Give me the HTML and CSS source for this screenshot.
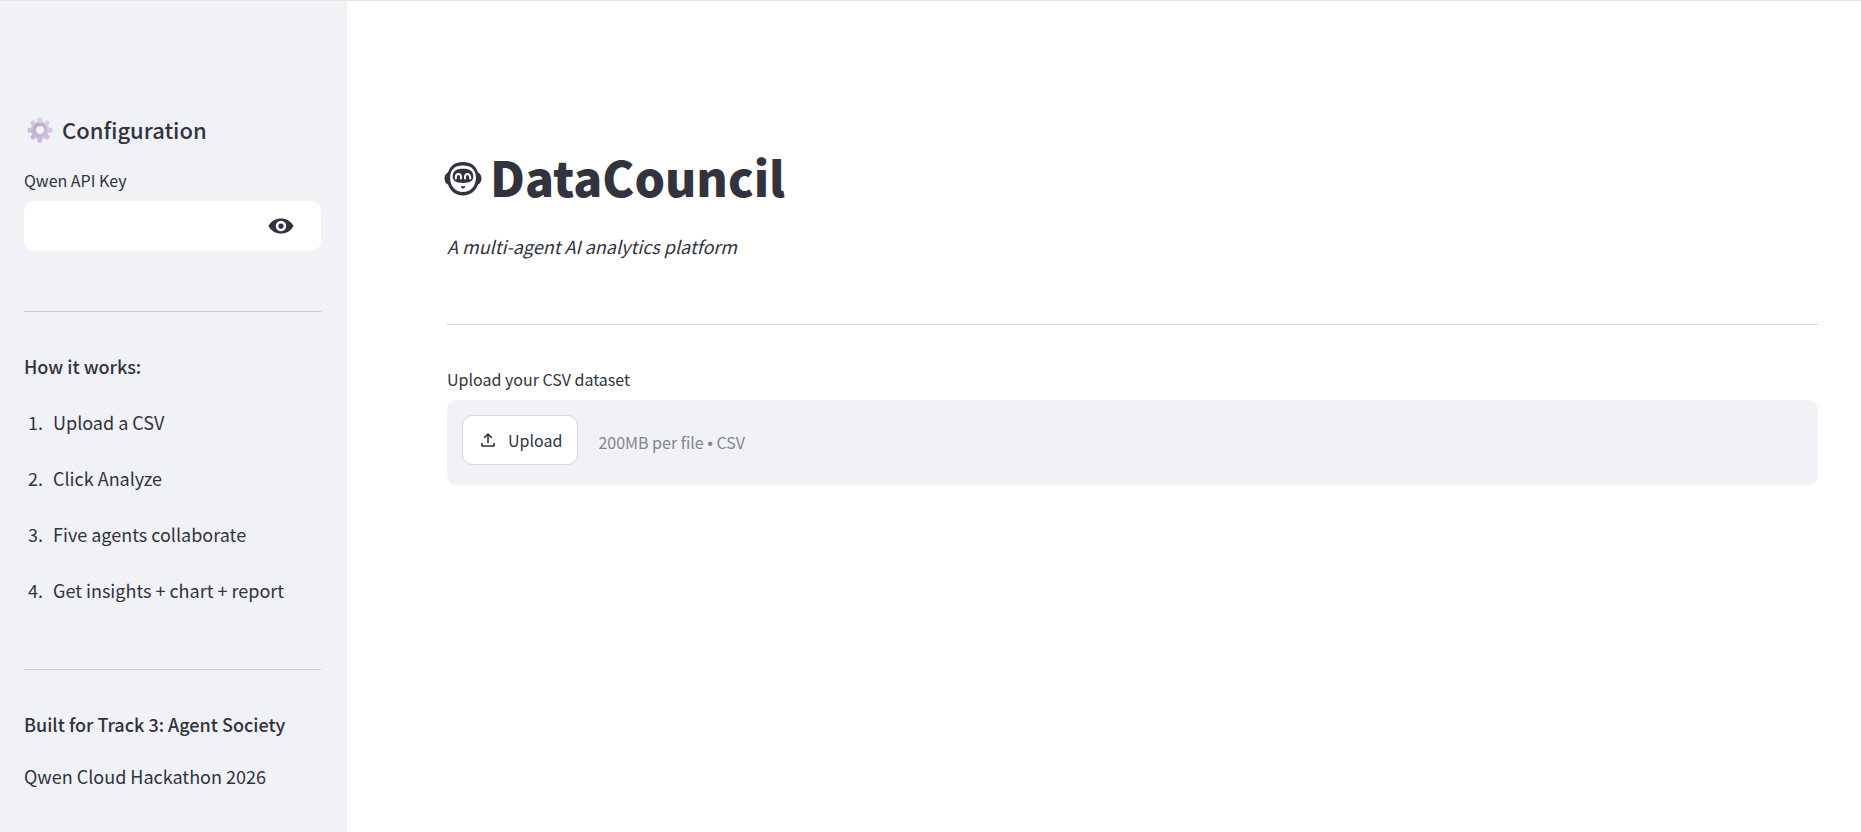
FILE: index.html
```html
<!DOCTYPE html>
<html lang="en">
<head>
<meta charset="utf-8">
<meta name="viewport" content="width=device-width, initial-scale=1">
<title>DataCouncil</title>
<link rel="stylesheet" href="styles.css">
</head>
<body>
<div class="decoration"></div>
<div class="app">
  <aside class="sidebar">
    <h2 class="sidebar-title">
      <svg class="gear" viewBox="0 0 26 26" aria-hidden="true">
        <defs>
          <linearGradient id="teeth" gradientUnits="userSpaceOnUse" x1="18" y1="2" x2="8" y2="25">
            <stop offset="0" stop-color="#dcd4e8"/>
            <stop offset="1" stop-color="#c3b4d8"/>
          </linearGradient>
          <linearGradient id="hub" gradientUnits="userSpaceOnUse" x1="8" y1="6" x2="18" y2="20">
            <stop offset="0" stop-color="#b8acc2"/>
            <stop offset="1" stop-color="#cbbcdb"/>
          </linearGradient>
        </defs>
        <g stroke="url(#teeth)" stroke-width="5" stroke-linecap="round">
          <path d="M13 3l.1 3M13 23l.1-3M3 13l3 .1M23 13l-3 .1M5.900 5.900l2 2M20.100 5.900l-2 2M5.900 20.100l2-2M20.100 20.100l-2-2"/>
        </g>
        <circle cx="13" cy="13" r="7.500" fill="none" stroke="url(#teeth)" stroke-width="3"/>
        <circle cx="13" cy="13" r="5.700" fill="none" stroke="url(#hub)" stroke-width="3.400"/>
      </svg>
      <span>Configuration</span>
    </h2>
    <label class="field-label" for="api-key">Qwen API Key</label>
    <div class="password">
      <input class="password-input" id="api-key" type="password">
      <button class="reveal" type="button" aria-label="Show password text">
        <svg class="eye" viewBox="0 0 24 24" aria-hidden="true">
          <path fill="#31333f" fill-rule="evenodd" d="M2 12C4 8 7.800 6 12 6s8 2 10 6c-2 4-5.800 6-10 6s-8-2-10-6zM12 7.800a4.200 4.200 0 1 0 0 8.400 4.200 4.200 0 0 0 0-8.400z"/>
          <circle cx="12" cy="12" r="2.100" fill="#31333f"/>
        </svg>
      </button>
    </div>
    <hr class="rule">
    <p class="strong">How it works:</p>
    <ol class="steps">
      <li>Upload a CSV</li>
      <li>Click Analyze</li>
      <li>Five agents collaborate</li>
      <li>Get insights + chart + report</li>
    </ol>
    <hr class="rule">
    <p class="strong">Built for Track 3: Agent Society</p>
    <p class="credit">Qwen Cloud Hackathon 2026</p>
  </aside>
  <main class="main">
    <h1 class="title">
      <svg class="robot" viewBox="0 0 38 34" aria-hidden="true">
        <path fill="#31333f" d="M19 0C27 0 32 4 34 10.500c2.500 1 3.500 3.500 3.500 6s-1 5-3.500 6C31.500 29.500 26 33.500 19 33.500S6.500 29.500 4 22.500c-2.500-1-3.500-3.500-3.500-6s1-5 3.500-6C6 4 11 0 19 0z"/>
        <path fill="#fff" d="M19 3.600c8.500 0 12.900 4.400 12.900 12.200 0 8.600-5.200 14.200-12.900 14.200S6.100 24.400 6.100 15.800C6.100 8 10.500 3.600 19 3.600z"/>
        <path fill="#31333f" d="M19 6.800c7.200 0 10.300 2.500 10.300 8 0 4.500-4 6.200-10.300 6.200S8.700 19.300 8.700 14.800c0-5.500 3.100-8 10.300-8z"/>
        <path fill="none" stroke="#fff" stroke-width="2" stroke-linecap="round" d="M11.800 16.500v-1.200a2.600 3.200 0 0 1 5.200 0v1.200M21 16.500v-1.200a2.600 3.200 0 0 1 5.200 0v1.200"/>
        <path fill="#31333f" d="M17 24.200h4c.5 1.300-.8 2.300-2 2.300s-2.500-1-2-2.300z"/>
      </svg>
      <span>DataCouncil</span>
    </h1>
    <p class="subtitle">A multi-agent AI analytics platform</p>
    <hr class="rule rule-main">
    <section class="uploader" aria-labelledby="upload-label">
      <p class="field-label" id="upload-label">Upload your CSV dataset</p>
      <div class="dropzone">
        <button class="upload" type="button">
          <svg class="upload-icon" viewBox="0 0 20 20" fill="none" stroke="#31333f" stroke-width="1.600" stroke-linecap="round" stroke-linejoin="round" aria-hidden="true">
            <path d="M10 12.500V4.500M6.500 7.500L10 4l3.500 3.500M4 13.500v2.500h12v-2.500"/>
          </svg>
          <span>Upload</span>
        </button>
        <span class="limit">200MB per file <span class="bullet">•</span> CSV</span>
      </div>
    </section>
  </main>
</div>
</body>
</html>
```

FILE: styles.css
```css
* {
  box-sizing: border-box;
  margin: 0;
  padding: 0;
}

body {
  background: #fff;
  color: #31333f;
  font: 400 18px/32px "Noto Sans CJK SC", "Noto Sans", sans-serif;
}

button,
input {
  font: inherit;
  color: inherit;
}

.decoration {
  position: absolute;
  top: 0;
  left: 0;
  right: 0;
  height: 1px;
  background: #f9ddd9;
}

.app {
  display: flex;
  min-height: 100vh;
}

.sidebar {
  flex: 0 0 347px;
  padding: 113px 26px 20px 24px;
  background: #f0f2f6;
}

.sidebar-title {
  display: flex;
  align-items: center;
  gap: 9px;
  padding-left: 3px;
  margin-bottom: 23px;
  font-size: 22px;
  font-weight: 500;
}

.gear {
  width: 26px;
  height: 26px;
  margin-top: 1px;
}

.field-label {
  display: block;
  margin-bottom: 9px;
  font-size: 16px;
  line-height: 24px;
}

.password {
  display: flex;
  height: 50px;
  margin-bottom: 60px;
  border-radius: 10px;
  background: #fff;
}

.password-input {
  flex: 1;
  min-width: 0;
  padding: 0 15px;
  border: 0;
  border-radius: 10px;
  outline: 0;
  background: transparent;
}

.reveal {
  display: flex;
  align-items: center;
  padding: 0 25px 0 10px;
  border: 0;
  background: transparent;
}

.eye {
  width: 30px;
  height: 30px;
}

.rule {
  height: 1px;
  margin-bottom: 38px;
  border: 0;
  background: #cacccf;
}

.rule-main {
  margin-bottom: 42px;
  background: #d6d6d9;
}

.strong {
  font-weight: 500;
}

.steps {
  display: flex;
  flex-direction: column;
  gap: 24px;
  padding-left: 4px;
  margin: 24px 0 63px;
  list-style: none;
  counter-reset: step;
}

.steps li {
  display: flex;
  counter-increment: step;
}

.steps li::before {
  content: counter(step) ".";
  flex: 0 0 25px;
}

.credit {
  margin-top: 20px;
}

.main {
  flex: 1;
  min-width: 0;
  padding: 142px 43px 40px 100px;
}

.title {
  display: flex;
  align-items: center;
  gap: 8px;
  margin: 0 0 20px -3px;
  font-size: 48px;
  font-weight: 900;
  line-height: 68px;
}

.robot {
  width: 38px;
  height: 34px;
  margin-top: 6px;
}

.subtitle {
  margin-bottom: 62px;
  font-style: italic;
}

.dropzone {
  display: flex;
  align-items: center;
  gap: 20px;
  min-height: 85px;
  padding: 15px;
  border-radius: 10px;
  background: #f0f2f6;
}

.upload {
  display: flex;
  align-items: center;
  align-self: flex-start;
  gap: 10px;
  height: 50px;
  padding: 0 15px;
  border: 1px solid #d6d6d9;
  border-radius: 10px;
  background: #fff;
  font-size: 16px;
}

.upload-icon {
  width: 20px;
  height: 20px;
}

.limit {
  color: #83858e;
  font-size: 16px;
  line-height: 24px;
}

.bullet {
  font-family: "Liberation Sans", sans-serif;
}
```
